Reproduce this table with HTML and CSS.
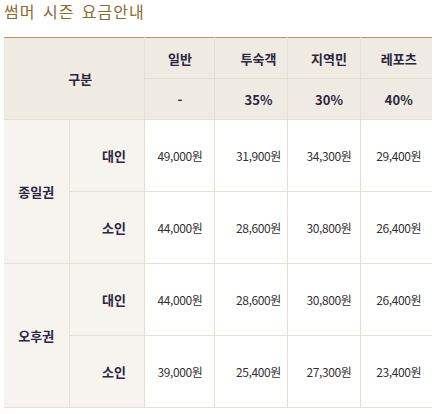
FILE: index.html
```html
<!DOCTYPE html>
<html lang="ko">
<head>
<meta charset="utf-8">
<link rel="stylesheet" href="styles.css">
</head>
<body>
<div class="wrap">
  <h2 class="title">썸머 시즌 요금안내</h2>
  <table class="fee">
    <colgroup>
      <col class="w-a"><col class="w-b"><col class="w-c"><col class="w-d"><col class="w-e"><col class="w-f">
    </colgroup>
    <thead>
      <tr class="hrow">
        <th colspan="2" rowspan="2" class="gubun">구분</th>
        <th class="c1">일반</th>
        <th class="c2">투숙객</th>
        <th class="c3">지역민</th>
        <th class="c4">레포츠</th>
      </tr>
      <tr class="hrow">
        <th class="c1">-</th>
        <th class="c2">35%</th>
        <th class="c3">30%</th>
        <th class="c4">40%</th>
      </tr>
    </thead>
    <tbody>
      <tr class="drow">
        <th rowspan="2" class="kind">종일권</th>
        <th class="age">대인</th>
        <td class="c1">49,000원</td>
        <td class="c2">31,900원</td>
        <td class="c3">34,300원</td>
        <td class="c4">29,400원</td>
      </tr>
      <tr class="drow">
        <th class="age">소인</th>
        <td class="c1">44,000원</td>
        <td class="c2">28,600원</td>
        <td class="c3">30,800원</td>
        <td class="c4">26,400원</td>
      </tr>
      <tr class="drow">
        <th rowspan="2" class="kind">오후권</th>
        <th class="age">대인</th>
        <td class="c1">44,000원</td>
        <td class="c2">28,600원</td>
        <td class="c3">30,800원</td>
        <td class="c4">26,400원</td>
      </tr>
      <tr class="drow">
        <th class="age">소인</th>
        <td class="c1">39,000원</td>
        <td class="c2">25,400원</td>
        <td class="c3">27,300원</td>
        <td class="c4">23,400원</td>
      </tr>
    </tbody>
  </table>
</div>
</body>
</html>
```

FILE: styles.css
```css
html, body {
  margin: 0;
  padding: 0;
  background: #ffffff;
}
body {
  font-family: "Noto Sans CJK KR", "Noto Sans", sans-serif;
}
.wrap {
  padding: 0 4px;
}
.title {
  margin: 0;
  padding-top: 0;
  height: 37px;
  font-size: 16px;
  line-height: 22px;
  font-weight: normal;
  color: #8c6b2f;
  letter-spacing: 1px;
  word-spacing: 2px;
}
.fee {
  width: 428px;
  table-layout: fixed;
  border-collapse: collapse;
  border-top: 1px solid #b8976a;
}
.w-a { width: 65px; }
.w-b { width: 75px; }
.w-c { width: 70px; }
.w-d { width: 73px; }
.w-e { width: 73px; }
.w-f { width: 72px; }
.fee th, .fee td {
  border: 1px solid #e6dfd2;
  padding: 0;
  text-align: center;
  vertical-align: middle;
}
.fee tr:first-child th { border-top: none; }
.fee th:first-child, .fee td:first-child { border-left: none; }
.fee tr > :last-child { border-right: none; }
.hrow { height: 41px; }
.drow { height: 72px; }
.fee thead th {
  background: #efebe2;
  color: #2b2540;
  font-size: 13px;
  font-weight: bold;
}
.fee tbody th {
  background: #f7f4ef;
  color: #2b2540;
  font-size: 13px;
  font-weight: bold;
}
.fee td {
  background: #ffffff;
  color: #333333;
  font-size: 12px;
  letter-spacing: -0.4px;
}
.gubun { padding-left: 13px !important; }
.age { padding-left: 15px !important; }
.c1 { padding-left: 2px !important; }
.c2 { padding-left: 16px !important; }
.c3 { padding-left: 11px !important; }
.c4 { padding-left: 5px !important; }
```
